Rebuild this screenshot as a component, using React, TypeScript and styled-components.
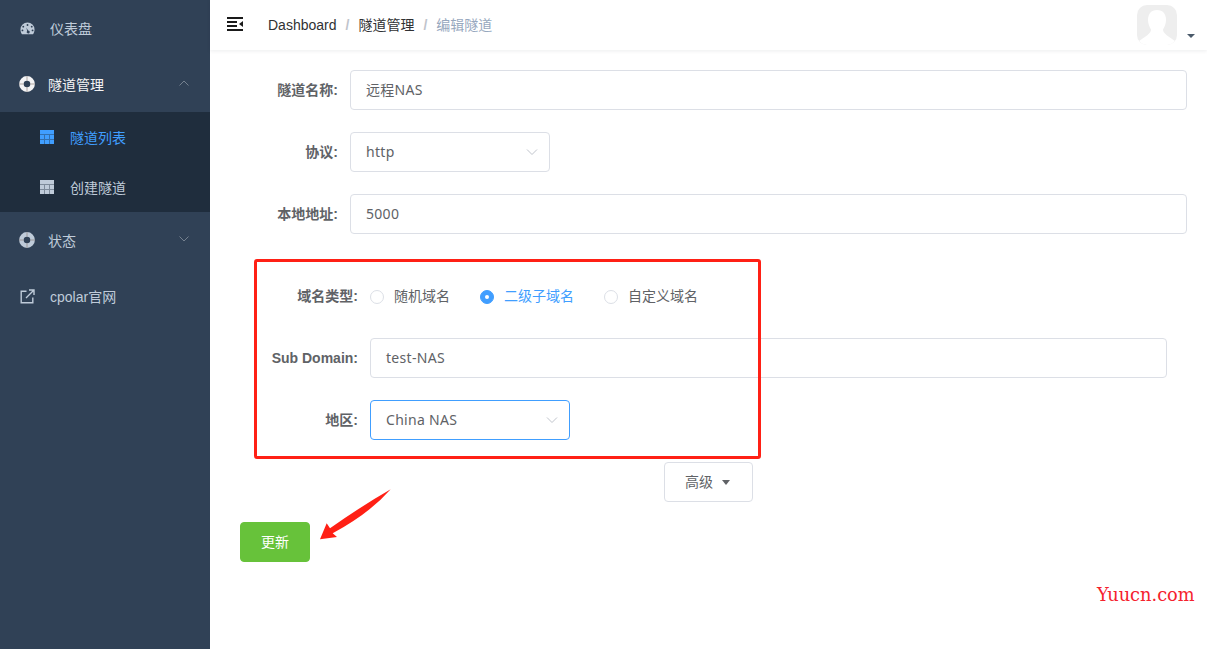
import React from "react";
import styled, { createGlobalStyle } from "styled-components";

const GlobalStyle = createGlobalStyle`
  html, body {
    margin: 0;
    padding: 0;
    background: #fff;
    font-family: "Liberation Sans", "Noto Sans CJK SC", sans-serif;
    font-size: 14px;
    overflow: hidden;
  }
  * { box-sizing: border-box; }
`;

const Layout = styled.div`
  display: flex;
  width: 1207px;
  height: 649px;
  position: relative;
  overflow: hidden;
`;

const Sidebar = styled.aside`
  width: 210px;
  flex: none;
  background: #304156;
`;

const MenuItem = styled.div<{ $active?: boolean; $gap?: number }>`
  display: flex;
  align-items: center;
  height: 56px;
  padding-left: 20px;
  gap: ${(p) => p.$gap ?? 14}px;
  color: ${(p) => (p.$active ? "#f4f4f5" : "#bfcbd9")};
  position: relative;
  svg.icon { flex: none; width: 15px; height: 15px; }
`;

const RingSvg = styled.svg`
  flex: none;
  width: 16px;
  height: 16px;
  margin-left: -1px;
`;

const Chevron = styled.svg`
  position: absolute;
  right: 20px;
  top: 23px;
  width: 12px;
  height: 8px;
  fill: none;
  stroke: #75818f;
  stroke-width: 1;
`;

const SubMenu = styled.div`
  background: #1f2d3d;
`;

const SubItem = styled.div<{ $active?: boolean }>`
  display: flex;
  align-items: center;
  height: 50px;
  padding-left: 40px;
  gap: 16px;
  color: ${(p) => (p.$active ? "#409eff" : "#bfcbd9")};
`;

const TableSvg = styled.svg`
  flex: none;
  width: 14px;
  height: 14px;
`;

const Main = styled.main`
  flex: 1;
  min-width: 0;
`;

const Navbar = styled.header`
  height: 50px;
  display: flex;
  align-items: center;
  position: relative;
  box-shadow: 0 1px 4px rgba(0, 21, 41, 0.08);
`;

const Hamburger = styled.svg`
  width: 16px;
  height: 14px;
  margin-left: 17px;
  margin-top: -2px;
  flex: none;
`;

const Breadcrumb = styled.nav`
  display: flex;
  align-items: center;
  margin-left: 25px;
  color: #303133;
`;

const Crumb = styled.span`
  padding-bottom: 2px;
`;

const Sep = styled.span`
  color: #c0c4cc;
  font-weight: 700;
  margin: 0 9px;
`;

const Current = styled(Crumb)`
  color: #97a8be;
`;

const Avatar = styled.div`
  position: absolute;
  right: 30px;
  top: 5px;
  width: 40px;
  height: 40px;
  border-radius: 10px;
  overflow: hidden;
  background: #eeeeee;
  svg { display: block; }
`;

const AvatarCaret = styled.div`
  position: absolute;
  right: 12px;
  top: 34px;
  border-left: 4px solid transparent;
  border-right: 4px solid transparent;
  border-top: 4px solid #4a5a6a;
`;

const Form = styled.form`
  padding: 20px 20px 0;
`;

const FormItem = styled.div`
  display: flex;
  margin-bottom: 22px;
  min-height: 40px;
`;

const Label = styled.label`
  width: 120px;
  flex: none;
  padding-right: 12px;
  text-align: right;
  line-height: 40px;
  font-weight: 700;
  color: #606266;
`;

const Control = styled.div<{ $width?: number; $focus?: boolean }>`
  flex: ${(p) => (p.$width ? "none" : "1")};
  width: ${(p) => (p.$width ? `${p.$width}px` : "auto")};
  height: 40px;
  display: flex;
  align-items: center;
  justify-content: space-between;
  padding: 0 15px 2px;
  border: 1px solid ${(p) => (p.$focus ? "#409eff" : "#dcdfe6")};
  border-radius: 4px;
  color: #606266;
  background: #fff;
  font-family: "Noto Sans", "Noto Sans CJK SC", sans-serif;
  letter-spacing: 0.3px;
`;

const SelectArrow = styled.svg`
  width: 12px;
  height: 8px;
  fill: none;
  stroke: #c0c4cc;
  stroke-width: 1;
  margin-right: -4px;
  margin-top: 2px;
`;

const Nested = styled.div`
  padding: 20px 20px 0;
`;

const RadioGroup = styled.div`
  display: flex;
  align-items: center;
  gap: 30px;
`;

const Radio = styled.span<{ $checked?: boolean }>`
  display: flex;
  align-items: center;
  gap: 10px;
  color: ${(p) => (p.$checked ? "#409eff" : "#606266")};
`;

const RadioText = styled.span`
  padding-bottom: 2px;
`;

const RadioDot = styled.span<{ $checked?: boolean }>`
  width: 14px;
  height: 14px;
  margin-top: 2px;
  border-radius: 50%;
  border: 1px solid ${(p) => (p.$checked ? "#409eff" : "#dcdfe6")};
  background: ${(p) => (p.$checked ? "#409eff" : "#fff")};
  display: flex;
  align-items: center;
  justify-content: center;
  &::after {
    content: "";
    width: 4px;
    height: 4px;
    border-radius: 50%;
    background: #fff;
  }
`;

const AdvancedRow = styled.div`
  padding-left: 434px;
  margin-bottom: 20px;
`;

const AdvancedButton = styled.button`
  width: 89px;
  height: 40px;
  border: 1px solid #dcdfe6;
  border-radius: 4px;
  background: #fff;
  color: #606266;
  font: inherit;
  display: flex;
  align-items: center;
  justify-content: center;
  gap: 9px;
  padding: 0 2px 2px 0;
`;

const Caret = styled.i`
  margin-top: 2px;
  border-left: 4.500px solid transparent;
  border-right: 4.500px solid transparent;
  border-top: 5px solid #606266;
`;

const SubmitButton = styled.button`
  display: block;
  margin-left: 10px;
  width: 70px;
  height: 40px;
  border: 1px solid #67c23a;
  border-radius: 4px;
  background: #67c23a;
  color: #fff;
  font: inherit;
  padding: 0 0 2px;
`;

const RedBox = styled.div`
  position: absolute;
  left: 254px;
  top: 259px;
  width: 507px;
  height: 200px;
  border: 3px solid #ff2015;
  border-radius: 3px;
  pointer-events: none;
`;

const RedArrow = styled.svg`
  position: absolute;
  left: 310px;
  top: 480px;
  width: 90px;
  height: 70px;
`;

const Watermark = styled.div`
  position: absolute;
  left: 1097px;
  top: 584px;
  font-family: "DejaVu Serif", serif;
  font-size: 17.800px;
  line-height: 22px;
  color: #f5222d;
`;

const GaugeIcon = () => (
  <svg className="icon" viewBox="0 0 16 16">
    <path
      fill="#bfcbd9"
      fillRule="evenodd"
      d="M8 1.5a7.5 7.5 0 0 0-7.5 7.5c0 1.9.6 3.6 1.6 5h11.8c1-1.4 1.6-3.1 1.6-5A7.5 7.5 0 0 0 8 1.5zM8 3.2a1 1 0 1 1 0 2 1 1 0 0 1 0-2zM3.5 5a1 1 0 1 1 0 2 1 1 0 0 1 0-2zm9 0a1 1 0 1 1 0 2 1 1 0 0 1 0-2zM2.6 9a1 1 0 1 1 0 2 1 1 0 0 1 0-2zm10.8 0a1 1 0 1 1 0 2 1 1 0 0 1 0-2zM6.8 7l1.800 3.100a1.600 1.600 0 1 1-1 .5z"
    />
  </svg>
);

const RingIcon = ({ color }: { color: string }) => (
  <RingSvg viewBox="0 0 16 16">
    <circle cx="8" cy="8" r="5.600" fill="none" stroke={color} strokeWidth="4.600" />
    <path d="M0 8h4.800M11.200 8H16M8 0v4.800M8 11.200V16" stroke="#8b7f78" strokeWidth="1" opacity="0.65" />
  </RingSvg>
);

const TableIcon = ({ color }: { color: string }) => (
  <TableSvg viewBox="0 0 14 14">
    <rect width="14" height="14" fill={color} />
    <path d="M0 4.500h14M0 9.500h14M4.500 4.500V14M9.500 4.500V14" stroke="#1f2d3d" strokeWidth="1" opacity="0.4" />
  </TableSvg>
);

const LinkIcon = () => (
  <svg className="icon" viewBox="0 0 15 15" fill="none" stroke="#bfcbd9" strokeWidth="1.4">
    <path d="M6.500 2.200H1.200v11.600h11.600V8.500" />
    <path d="M6 9l7.500-7.500M9 1h5v5" />
  </svg>
);

const App: React.FC = () => (
  <>
    <GlobalStyle />
    <Layout>
      <Sidebar>
        <MenuItem $gap={15}>
          <GaugeIcon />
          仪表盘
        </MenuItem>
        <MenuItem $active $gap={13}>
          <RingIcon color="#f4f4f5" />
          隧道管理
          <Chevron viewBox="0 0 12 8">
            <path d="M1.500 6.500L6 2l4.500 4.500" />
          </Chevron>
        </MenuItem>
        <SubMenu>
          <SubItem $active>
            <TableIcon color="#409eff" />
            隧道列表
          </SubItem>
          <SubItem>
            <TableIcon color="#bfcbd9" />
            创建隧道
          </SubItem>
        </SubMenu>
        <MenuItem $gap={13}>
          <RingIcon color="#bfcbd9" />
          状态
          <Chevron viewBox="0 0 12 8">
            <path d="M1.500 1.500L6 6l4.500-4.500" />
          </Chevron>
        </MenuItem>
        <MenuItem $gap={15}>
          <LinkIcon />
          cpolar官网
        </MenuItem>
      </Sidebar>
      <Main>
        <Navbar>
          <Hamburger viewBox="0 0 16 14">
            <path d="M0 1h16M0 13h16M0 5h10M0 9h10" stroke="#1a1a1a" strokeWidth="2" />
            <path d="M12 7l4-3v6z" fill="#1a1a1a" />
          </Hamburger>
          <Breadcrumb>
            Dashboard
            <Sep>/</Sep>
            <Crumb>隧道管理</Crumb>
            <Sep>/</Sep>
            <Current>编辑隧道</Current>
          </Breadcrumb>
          <Avatar>
            <svg width="40" height="40" viewBox="0 0 40 40">
              <path
                fill="#fff"
                d="M20 5c-6 0-9 4-9 10 0 4 1.500 7 3 9.500 0 2-1 3.500-4 6L2 36l4 4h28l4-4-8-5.500c-3-2.500-4-4-4-6 1.500-2.500 3-5.500 3-9.500 0-6-3-10-9-10z"
              />
            </svg>
          </Avatar>
          <AvatarCaret />
        </Navbar>
        <Form>
          <FormItem>
            <Label>隧道名称:</Label>
            <Control>远程NAS</Control>
          </FormItem>
          <FormItem>
            <Label>协议:</Label>
            <Control $width={200}>
              http
              <SelectArrow viewBox="0 0 12 8">
                <path d="M1 1.500L6 6.500l5-5" />
              </SelectArrow>
            </Control>
          </FormItem>
          <FormItem>
            <Label>本地地址:</Label>
            <Control>5000</Control>
          </FormItem>
          <Nested>
            <FormItem>
              <Label>域名类型:</Label>
              <RadioGroup>
                <Radio>
                  <RadioDot />
                  <RadioText>随机域名</RadioText>
                </Radio>
                <Radio $checked>
                  <RadioDot $checked />
                  <RadioText>二级子域名</RadioText>
                </Radio>
                <Radio>
                  <RadioDot />
                  <RadioText>自定义域名</RadioText>
                </Radio>
              </RadioGroup>
            </FormItem>
            <FormItem>
              <Label>Sub Domain:</Label>
              <Control>test-NAS</Control>
            </FormItem>
            <FormItem>
              <Label>地区:</Label>
              <Control $width={200} $focus>
                China NAS
                <SelectArrow viewBox="0 0 12 8">
                  <path d="M1 1.500L6 6.500l5-5" />
                </SelectArrow>
              </Control>
            </FormItem>
          </Nested>
          <AdvancedRow>
            <AdvancedButton type="button">
              高级
              <Caret />
            </AdvancedButton>
          </AdvancedRow>
          <SubmitButton type="button">更新</SubmitButton>
        </Form>
      </Main>
      <RedBox />
      <RedArrow viewBox="0 0 90 70">
        <path fill="#ff2015" d="M10 59.300L27 57l-4.300-3.700Q60 33 80.700 9.300 50 27 20 48.300l-3.300-5z" />
      </RedArrow>
      <Watermark>Yuucn.com</Watermark>
    </Layout>
  </>
);

export default App;
